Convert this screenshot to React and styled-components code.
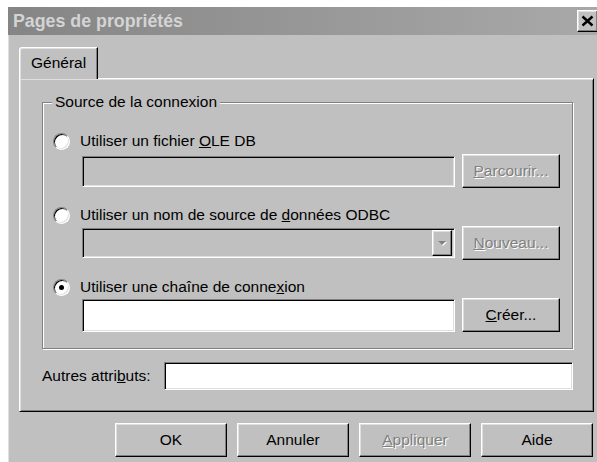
import React from "react";
import styled, { createGlobalStyle } from "styled-components";

const GlobalStyle = createGlobalStyle`
  html, body {
    margin: 0;
    padding: 0;
    overflow: hidden;
    background: #ffffff;
  }
  body {
    font-family: "Liberation Sans", Arial, sans-serif;
    font-size: 15.5px;
    color: #000;
  }
  * {
    box-sizing: border-box;
  }
`;

const raised = `
  border: 1px solid;
  border-color: #ffffff #000000 #000000 #ffffff;
  box-shadow: inset -1px -1px 0 #808080, inset 1px 1px 0 #dfdfdf;
`;

const sunken = `
  border: 1px solid;
  border-color: #808080 #ffffff #ffffff #808080;
  box-shadow: inset 1px 1px 0 #000000, inset -1px -1px 0 #dfdfdf;
`;

const Window = styled.div`
  margin: 7px 0 0 8px;
  width: 593px;
  height: 460px;
  background: #c0c0c0;
  display: flex;
  flex-direction: column;
`;

const TitleBar = styled.div`
  height: 28px;
  flex-shrink: 0;
  display: flex;
  align-items: center;
  justify-content: space-between;
  padding: 0 3px 0 5px;
  background: linear-gradient(to right, #858585, #a9a9a9);
`;

const Title = styled.span`
  font-weight: bold;
  font-size: 17.8px;
  color: #d4d4d4;
  white-space: nowrap;
`;

const CloseButton = styled.div`
  width: 21px;
  height: 22px;
  display: flex;
  align-items: center;
  justify-content: center;
  background: #c0c0c0;
  ${raised}
`;

const Body = styled.div`
  flex: 1;
  padding: 12px 0 0 10px;
  border-left: 1px solid #dfdfdf;
`;

const TabStrip = styled.div`
  display: flex;
`;

const Tab = styled.div`
  position: relative;
  z-index: 1;
  height: 32px;
  margin-bottom: -1px;
  padding: 0 11px 2px;
  display: flex;
  align-items: center;
  background: #c0c0c0;
  border-top: 1px solid #ffffff;
  border-left: 1px solid #ffffff;
  border-right: 1px solid #000000;
  border-top-left-radius: 3px;
  box-shadow: inset -1px 0 0 #808080, inset 1px 1px 0 #dfdfdf;
`;

const Panel = styled.div`
  width: 575px;
  height: 334px;
  border: 1px solid;
  border-color: #ffffff #000000 #000000 #ffffff;
  box-shadow: inset 1px 1px 0 #dfdfdf, inset -1px -1px 0 #808080;
  padding: 23px 20px 0 22px;
`;

const GroupBox = styled.div`
  position: relative;
  height: 247px;
  border: 1px solid #808080;
  box-shadow: inset 1px 1px 0 #ffffff, 1px 1px 0 #ffffff;
  padding: 28px 12px 0 10px;
  display: flex;
  flex-direction: column;
  gap: 17px;
`;

const Legend = styled.span`
  position: absolute;
  top: -10px;
  left: 9px;
  padding: 0 3px;
  line-height: 18px;
  background: #c0c0c0;
  white-space: nowrap;
`;

const Option = styled.div`
  display: flex;
  flex-direction: column;
`;

const OptionLabel = styled.div`
  height: 20px;
  display: flex;
  align-items: center;
  gap: 10px;
  white-space: nowrap;
`;

const Radio = styled.span`
  position: relative;
  width: 17px;
  height: 17px;
  flex-shrink: 0;
  border-radius: 50%;
  background: #ffffff;
  border: 1px solid;
  border-color: #808080 #ffffff #ffffff #808080;
  box-shadow: inset 1px 1px 0 #000000, inset -1px -1px 0 #dfdfdf;

  &::after {
    content: "";
    display: ${({ $checked }) => ($checked ? "block" : "none")};
    position: absolute;
    left: 5px;
    top: 5px;
    width: 5px;
    height: 5px;
    border-radius: 50%;
    background: #000000;
  }
`;

const FieldRow = styled.div`
  margin: ${({ $top }) => $top}px 0 0 29px;
  height: 34px;
  display: flex;
  align-items: center;
  gap: 7px;
`;

const TextField = styled.div`
  flex: 1;
  height: ${({ $h }) => $h || 31}px;
  background: ${({ $disabled }) => ($disabled ? "#c0c0c0" : "#ffffff")};
  ${sunken}
`;

const Combo = styled.div`
  flex: 1;
  height: 30px;
  background: #c0c0c0;
  display: flex;
  justify-content: flex-end;
  align-items: center;
  padding-right: 2px;
  ${sunken}
`;

const ComboArrow = styled.div`
  width: 20px;
  height: 26px;
  display: flex;
  align-items: center;
  justify-content: center;
  background: #c0c0c0;
  ${raised}
`;

const Button = styled.div`
  width: ${({ $w }) => $w}px;
  height: 34px;
  flex-shrink: 0;
  display: flex;
  align-items: center;
  justify-content: center;
  background: #c0c0c0;
  white-space: nowrap;
  color: ${({ $disabled }) => ($disabled ? "#808080" : "#000000")};
  text-shadow: ${({ $disabled }) => ($disabled ? "1px 1px 0 #ffffff" : "none")};
  ${raised}
`;

const AttrRow = styled.div`
  margin-top: 13px;
  height: 28px;
  display: flex;
  align-items: center;
  gap: 13px;
`;

const AttrLabel = styled.span`
  white-space: nowrap;
`;

const Footer = styled.div`
  width: 575px;
  margin-top: 11px;
  padding-right: 1px;
  display: flex;
  justify-content: flex-end;
  gap: 10px;
`;

const DownArrow = () => (
  <svg width="10" height="6" viewBox="0 0 10 6">
    <path d="M1 1h8L5 5z" fill="#ffffff" transform="translate(1 1)" />
    <path d="M1 1h8L5 5z" fill="#808080" />
  </svg>
);

const CloseIcon = () => (
  <svg width="13" height="12" viewBox="0 0 13 12">
    <path d="M1.5 1.5l10 9M11.5 1.5l-10 9" stroke="#000" strokeWidth="2.4" />
  </svg>
);

export default function App() {
  return (
    <>
      <GlobalStyle />
      <Window>
        <TitleBar>
          <Title>Pages de propriétés</Title>
          <CloseButton>
            <CloseIcon />
          </CloseButton>
        </TitleBar>
        <Body>
          <TabStrip>
            <Tab>Général</Tab>
          </TabStrip>
          <Panel>
            <GroupBox>
              <Legend>Source de la connexion</Legend>
              <Option>
                <OptionLabel>
                  <Radio />
                  <span>
                    Utiliser un fichier <u>O</u>LE DB
                  </span>
                </OptionLabel>
                <FieldRow $top={3}>
                  <TextField $disabled />
                  <Button $w={98} $disabled>
                    <u>P</u>arcourir...
                  </Button>
                </FieldRow>
              </Option>
              <Option>
                <OptionLabel>
                  <Radio />
                  <span>
                    Utiliser un nom de source de <u>d</u>onnées ODBC
                  </span>
                </OptionLabel>
                <FieldRow $top={1}>
                  <Combo>
                    <ComboArrow>
                      <DownArrow />
                    </ComboArrow>
                  </Combo>
                  <Button $w={98} $disabled>
                    <u>N</u>ouveau...
                  </Button>
                </FieldRow>
              </Option>
              <Option>
                <OptionLabel>
                  <Radio $checked />
                  <span>
                    Utiliser une chaîne de conne<u>x</u>ion
                  </span>
                </OptionLabel>
                <FieldRow $top={1}>
                  <TextField $h={33} />
                  <Button $w={98}>
                    <u>C</u>réer...
                  </Button>
                </FieldRow>
              </Option>
            </GroupBox>
            <AttrRow>
              <AttrLabel>
                Autres attri<u>b</u>uts:
              </AttrLabel>
              <TextField $h={28} />
            </AttrRow>
          </Panel>
          <Footer>
            <Button $w={112}>OK</Button>
            <Button $w={112}>Annuler</Button>
            <Button $w={112} $disabled>
              <u>A</u>ppliquer
            </Button>
            <Button $w={112}>Aide</Button>
          </Footer>
        </Body>
      </Window>
    </>
  );
}
